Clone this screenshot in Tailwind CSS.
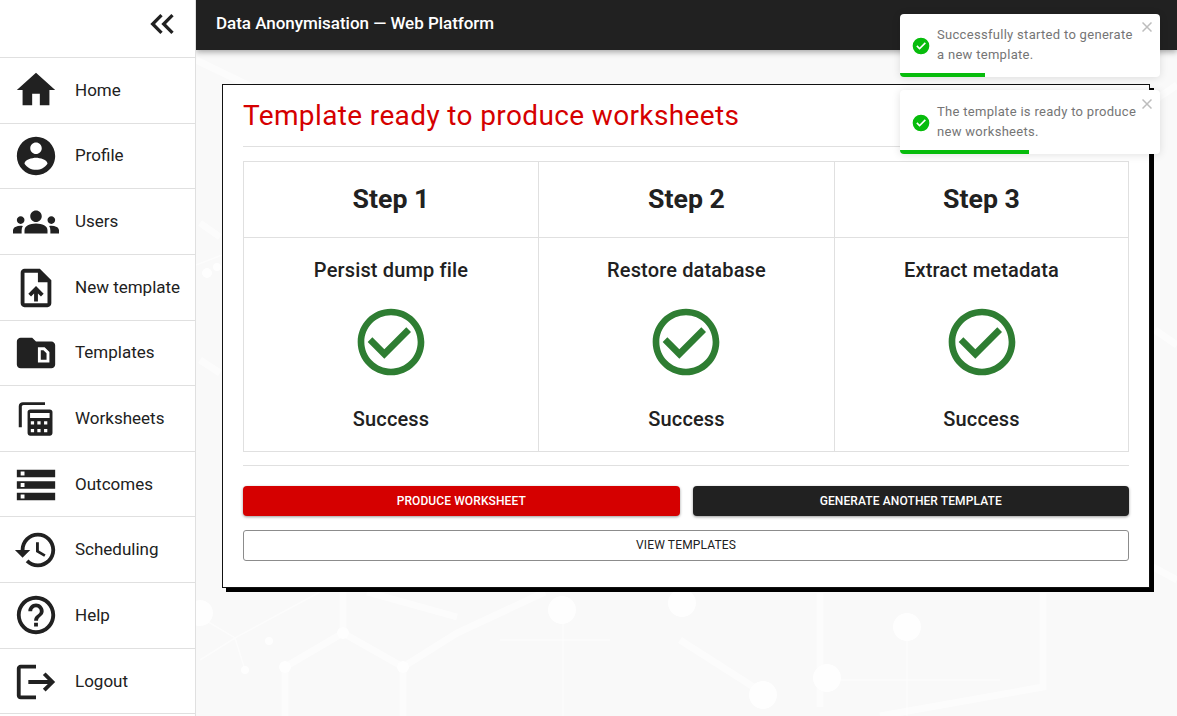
<!DOCTYPE html>
<html lang="en">
  <head>
    <meta charset="UTF-8" />
    <title>Data Anonymisation</title>
    <script src="https://cdn.jsdelivr.net/npm/@tailwindcss/browser@4"></script>
  </head>
  <body class="font-['Roboto',sans-serif] text-[#212121] bg-white">
    <div class="flex h-[716px] w-[1177px] overflow-hidden relative">
      <!-- sidebar -->
      <aside class="w-[196px] shrink-0 border-r border-[#e0e0e0] bg-white flex flex-col">
        <div class="h-[58px] border-b border-[#e0e0e0] flex justify-end items-start pt-1 pr-[13px]">
          <svg viewBox="0 0 24 24" class="w-10 h-10 fill-[#212121]"><path d="M17.59 18L19 16.59 14.42 12 19 7.41 17.59 6l-6 6zM11 18l1.41-1.41L7.83 12l4.58-4.59L11 6l-6 6z"/></svg>
        </div>
        <a class="h-[65.65px] shrink-0 border-b border-[#e0e0e0] flex items-center pl-[13px] gap-4 text-[17px]">
          <svg viewBox="0 0 24 24" class="w-[46px] h-[46px] fill-[#212121]"><path d="M10 20v-6h4v6h5v-8h3L12 3 2 12h3v8z"/></svg>Home
        </a>
        <a class="h-[65.65px] shrink-0 border-b border-[#e0e0e0] flex items-center pl-[13px] gap-4 text-[17px]">
          <svg viewBox="0 0 24 24" class="w-[46px] h-[46px] fill-[#212121]"><path d="M12 2C6.48 2 2 6.48 2 12s4.48 10 10 10 10-4.48 10-10S17.52 2 12 2zm0 3c1.66 0 3 1.34 3 3s-1.34 3-3 3-3-1.34-3-3 1.34-3 3-3zm0 14.2c-2.5 0-4.71-1.28-6-3.22.03-1.99 4-3.08 6-3.08 1.99 0 5.97 1.09 6 3.08-1.29 1.94-3.5 3.22-6 3.22z"/></svg>Profile
        </a>
        <a class="h-[65.65px] shrink-0 border-b border-[#e0e0e0] flex items-center pl-[13px] gap-4 text-[17px]">
          <svg viewBox="0 0 24 24" class="w-[46px] h-[46px] fill-[#212121]"><path d="M12 12.75c1.63 0 3.07.39 4.24.9 1.08.48 1.76 1.56 1.76 2.73V18H6v-1.61c0-1.18.68-2.26 1.76-2.73 1.17-.52 2.61-.91 4.24-.91zM4 13c1.1 0 2-.9 2-2s-.9-2-2-2-2 .9-2 2 .9 2 2 2zm1.13 1.1c-.37-.06-.74-.1-1.13-.1-.99 0-1.93.21-2.78.58C.48 14.9 0 15.62 0 16.43V18h4.5v-1.61c0-.83.23-1.61.63-2.29zM20 13c1.1 0 2-.9 2-2s-.9-2-2-2-2 .9-2 2 .9 2 2 2zm4 3.43c0-.81-.48-1.53-1.22-1.85-.85-.37-1.79-.58-2.78-.58-.39 0-.76.04-1.13.1.4.68.63 1.46.63 2.29V18H24v-1.57zM12 6c1.66 0 3 1.34 3 3s-1.34 3-3 3-3-1.34-3-3 1.34-3 3-3z"/></svg>Users
        </a>
        <a class="h-[65.65px] shrink-0 border-b border-[#e0e0e0] flex items-center pl-[13px] pt-[2px] gap-4 text-[17px]">
          <svg viewBox="0 0 24 24" class="w-[46px] h-[46px] fill-[#212121]"><path d="M14 2H6c-1.1 0-1.99.9-1.99 2L4 20c0 1.1.89 2 1.99 2H18c1.1 0 2-.9 2-2V8l-6-6zm4 18H6V4h7v5h5v11zM8 15.01l1.41 1.41L11 14.84V19h2v-4.16l1.59 1.59L16 15.01 12.01 11 8 15.01z"/></svg>New template
        </a>
        <a class="h-[65.65px] shrink-0 border-b border-[#e0e0e0] flex items-center pl-[13px] gap-4 text-[17px]">
          <svg viewBox="0 0 24 24" class="w-[46px] h-[46px] fill-[#212121]"><path d="M15.88 10.5l1.62 1.62v3.38l-3 0v-5H15.88z M22 8v10c0 1.1-.9 2-2 2H4c-1.1 0-2-.9-2-2L2.01 6C2.01 4.9 2.9 4 4 4h6l2 2h8C21.1 6 22 6.9 22 8z M19 11.5L16.5 9H13v8l6 0V11.5z"/></svg>Templates
        </a>
        <a class="h-[65.65px] shrink-0 border-b border-[#e0e0e0] flex items-center pl-[13px] gap-4 text-[17px]">
          <svg viewBox="0 0 24 24" class="w-[46px] h-[46px] fill-[#212121]">
            <path d="M16.7 3.2H5.2A2.2 2.2 0 0 0 3 5.4v10.9h1.6V5.6c0-.5.4-.9.9-.9h11.2z"/>
            <path fill-rule="evenodd" d="M9 7h10.2c.8 0 1.4.6 1.4 1.4v10.9c0 .8-.6 1.4-1.4 1.4H9c-.8 0-1.4-.6-1.4-1.4V8.4C7.6 7.6 8.2 7 9 7zm-.1 1.9v2.6h10.2V8.9zm.4 4.3v1.7H11v-1.7zm3.4 0v1.7h1.7v-1.7zm3.5 0v1.7h1.7v-1.7zm-6.9 4v1.7H11v-1.7zm3.4 0v1.7h1.7v-1.7zm3.5 0v1.7h1.7v-1.7z"/>
          </svg>Worksheets
        </a>
        <a class="h-[65.65px] shrink-0 border-b border-[#e0e0e0] flex items-center pl-[13px] pt-[2px] gap-4 text-[17px]">
          <svg viewBox="0 0 24 24" class="w-[46px] h-[46px] fill-[#212121]"><path d="M2 20h20v-4H2v4zm2-3h2v2H4v-2zM2 4v4h20V4H2zm4 3H4V5h2v2zm-4 7h20v-4H2v4zm2-3h2v2H4v-2z"/></svg>Outcomes
        </a>
        <a class="h-[65.65px] shrink-0 border-b border-[#e0e0e0] flex items-center pl-[13px] gap-4 text-[17px]">
          <svg viewBox="0 0 24 24" class="w-[46px] h-[46px] fill-[#212121]"><path d="M13 3c-4.97 0-9 4.03-9 9H1l3.89 3.89.07.14L9 12H6c0-3.87 3.13-7 7-7s7 3.13 7 7-3.13 7-7 7c-1.93 0-3.68-.79-4.94-2.06l-1.42 1.42C8.27 19.99 10.51 21 13 21c4.97 0 9-4.03 9-9s-4.03-9-9-9zm-1 5v5l4.28 2.54.72-1.21-3.5-2.08V8H12z"/></svg>Scheduling
        </a>
        <a class="h-[65.65px] shrink-0 border-b border-[#e0e0e0] flex items-center pl-[13px] gap-4 text-[17px]">
          <svg viewBox="0 0 24 24" class="w-[46px] h-[46px] fill-[#212121]"><path d="M11 18h2v-2h-2v2zm1-16C6.48 2 2 6.48 2 12s4.48 10 10 10 10-4.48 10-10S17.52 2 12 2zm0 18c-4.41 0-8-3.59-8-8s3.59-8 8-8 8 3.59 8 8-3.59 8-8 8zm0-14c-2.21 0-4 1.79-4 4h2c0-1.1.9-2 2-2s2 .9 2 2c0 2-3 1.75-3 5h2c0-2.25 3-2.5 3-5 0-2.21-1.79-4-4-4z"/></svg>Help
        </a>
        <a class="h-[65.65px] shrink-0 border-b border-[#e0e0e0] flex items-center pl-[13px] pt-[2px] gap-4 text-[17px]">
          <svg viewBox="0 0 24 24" class="w-[46px] h-[46px] fill-[#212121]"><path d="M17 7l-1.41 1.41L18.17 11H8v2h10.17l-2.58 2.58L17 17l5-5zM4 5h8V3H4c-1.1 0-2 .9-2 2v14c0 1.1.9 2 2 2h8v-2H4V5z"/></svg>Logout
        </a>
      </aside>

      <!-- main -->
      <main class="flex-1 relative bg-[#f9f9f9] overflow-hidden">
        <!-- faint hexagon backdrop -->
        <svg class="absolute inset-0 w-full h-full" viewBox="196 0 981 716" fill="none" stroke="#ffffff">
          <g stroke-width="7" opacity=".55">
            <path d="M285 667L343 633L403 667L457 633L545 592M285 667V716M403 667V716M343 633V592M367 592L457 617"/>
            <path d="M680 640L763 693M1043 593V687L880 716M1153 567L1177 580M820 593V707"/>
            <path d="M200 223L220 237M200 360L220 373M1155 330L1177 345"/>
            <path d="M196 60L300 110M1155 100L1177 85"/>
          </g>
          <g stroke-width="1.5" opacity=".5">
            <path d="M200 617L235 638L320 592M235 638L200 660M235 638L245 670M563 623V716M500 640H610M907 627V716M820 680H1000"/>
            <path d="M196 265L222 255"/>
          </g>
          <g fill="#ffffff" stroke="none" opacity=".85">
            <circle cx="200" cy="613" r="13"/><circle cx="562" cy="610" r="14"/><circle cx="682" cy="603" r="14"/><circle cx="907" cy="627" r="14"/><circle cx="827" cy="678" r="14"/><circle cx="763" cy="695" r="14"/>
            <circle cx="269" cy="641" r="4"/><circle cx="245" cy="670" r="4"/><circle cx="285" cy="667" r="6"/><circle cx="403" cy="667" r="6"/><circle cx="343" cy="633" r="6"/>
            <circle cx="207" cy="273" r="5"/><circle cx="217" cy="267" r="4"/>
          </g>
        </svg>

        <header class="relative h-[50px] bg-[#212121] text-white shadow-[0_2px_6px_rgba(0,0,0,0.35)] pl-5 pt-[11px] text-[17px] font-medium leading-[24px] tracking-[-0.03px]">
          Data Anonymisation — Web Platform
        </header>

        <section class="relative ml-[26px] mt-[34px] w-[928px] h-[504px] bg-white border border-[#111] shadow-[4px_4px_0_#000] px-5 flex flex-col">
          <h2 class="text-[28px] leading-[32px] text-[#d50000] mt-[15px] tracking-[0.37px]">Template ready to produce worksheets</h2>
          <hr class="mt-[14px] border-[#e0e0e0]" />

          <div class="mt-[14px] w-[886px] border border-[#e0e0e0] grid grid-cols-[295px_296px_293px] text-center">
            <div class="h-[76px] border-b border-r border-[#e0e0e0] flex items-center justify-center text-[26.7px] font-bold">Step 1</div>
            <div class="h-[76px] border-b border-r border-[#e0e0e0] flex items-center justify-center text-[26.7px] font-bold">Step 2</div>
            <div class="h-[76px] border-b border-[#e0e0e0] flex items-center justify-center text-[26.7px] font-bold">Step 3</div>

            <div class="h-[213px] border-r border-[#e0e0e0] flex flex-col items-center text-[20px] font-medium tracking-[0.15px]">
              <p class="mt-[20px] leading-[24px]">Persist dump file</p>
              <svg viewBox="0 0 24 24" class="w-20 h-20 mt-[20px] fill-[#2e7d32]"><path d="M16.59 7.58L10 14.17l-3.59-3.58L5 12l5 5 8-8zM12 2C6.48 2 2 6.48 2 12s4.48 10 10 10 10-4.48 10-10S17.52 2 12 2zm0 18c-4.42 0-8-3.58-8-8s3.58-8 8-8 8 3.58 8 8-3.58 8-8 8z"/></svg>
              <p class="mt-[25px] leading-[24px]">Success</p>
            </div>
            <div class="h-[213px] border-r border-[#e0e0e0] flex flex-col items-center text-[20px] font-medium tracking-[0.15px]">
              <p class="mt-[20px] leading-[24px]">Restore database</p>
              <svg viewBox="0 0 24 24" class="w-20 h-20 mt-[20px] -ml-px fill-[#2e7d32]"><path d="M16.59 7.58L10 14.17l-3.59-3.58L5 12l5 5 8-8zM12 2C6.48 2 2 6.48 2 12s4.48 10 10 10 10-4.48 10-10S17.52 2 12 2zm0 18c-4.42 0-8-3.58-8-8s3.58-8 8-8 8 3.58 8 8-3.58 8-8 8z"/></svg>
              <p class="mt-[25px] leading-[24px]">Success</p>
            </div>
            <div class="h-[213px] flex flex-col items-center text-[20px] font-medium tracking-[0.15px]">
              <p class="mt-[20px] leading-[24px]">Extract metadata</p>
              <svg viewBox="0 0 24 24" class="w-20 h-20 mt-[20px] fill-[#2e7d32]"><path d="M16.59 7.58L10 14.17l-3.59-3.58L5 12l5 5 8-8zM12 2C6.48 2 2 6.48 2 12s4.48 10 10 10 10-4.48 10-10S17.52 2 12 2zm0 18c-4.42 0-8-3.58-8-8s3.58-8 8-8 8 3.58 8 8-3.58 8-8 8z"/></svg>
              <p class="mt-[25px] leading-[24px]">Success</p>
            </div>
          </div>

          <hr class="mt-[13px] w-[886px] border-[#e0e0e0]" />

          <div class="mt-5 w-[886px] flex gap-[13px]">
            <button class="flex-1 h-[30px] rounded bg-[#d50000] text-white text-xs font-medium tracking-[0.1px] shadow-[0_1px_3px_rgba(0,0,0,0.4)]">PRODUCE WORKSHEET</button>
            <button class="flex-1 h-[30px] rounded bg-[#212121] text-white text-xs font-medium tracking-[0.1px] shadow-[0_1px_3px_rgba(0,0,0,0.4)]">GENERATE ANOTHER TEMPLATE</button>
          </div>
          <button class="mt-[14px] w-[886px] h-[31px] rounded-[3px] border border-[#8c8c8c] text-xs tracking-[0.15px] text-[#212121] pb-px">VIEW TEMPLATES</button>
        </section>
      </main>

      <!-- toasts -->
      <div class="absolute left-[900px] top-[14px] w-[260px] h-[63px] bg-white rounded shadow-[0_1px_8px_rgba(0,0,0,0.12)] overflow-hidden flex items-center text-[13px] leading-[20px] tracking-[0.3px] text-[#757575] pl-[11px]">
        <svg viewBox="0 0 24 24" class="w-[20px] h-[20px] mr-[6px] shrink-0 fill-[#07bc0c]"><path d="M12 2a10 10 0 1 0 0 20 10 10 0 0 0 0-20zm-1.7 14.6l-4-4 1.4-1.4 2.6 2.6 6.2-6.2 1.4 1.4z"/></svg>
        <span class="w-[202px] -mt-[2px]">Successfully started to generate a new template.</span>
        <svg viewBox="0 0 10 10" class="absolute right-[8px] top-[8px] w-[10px] h-[10px] stroke-[#bdbdbd] stroke-[1.5]"><path d="M0.5 0.5L9.5 9.5M9.5 0.5L0.5 9.5"/></svg>
        <div class="absolute left-0 bottom-0 h-1 w-[85px] bg-[#07bc0c]"></div>
      </div>
      <div class="absolute left-[900px] top-[90px] w-[260px] h-[64px] bg-white rounded shadow-[0_1px_8px_rgba(0,0,0,0.12)] overflow-hidden flex items-center text-[13px] leading-[20px] tracking-[0.3px] text-[#757575] pl-[11px]">
        <svg viewBox="0 0 24 24" class="w-[20px] h-[20px] mr-[6px] shrink-0 fill-[#07bc0c] mt-[1px]"><path d="M12 2a10 10 0 1 0 0 20 10 10 0 0 0 0-20zm-1.7 14.6l-4-4 1.4-1.4 2.6 2.6 6.2-6.2 1.4 1.4z"/></svg>
        <span class="w-[202px] -mt-[1px]">The template is ready to produce new worksheets.</span>
        <svg viewBox="0 0 10 10" class="absolute right-[8px] top-[9px] w-[10px] h-[10px] stroke-[#bdbdbd] stroke-[1.5]"><path d="M0.5 0.5L9.5 9.5M9.5 0.5L0.5 9.5"/></svg>
        <div class="absolute left-0 bottom-0 h-1 w-[129px] bg-[#07bc0c]"></div>
      </div>
    </div>
  </body>
</html>
